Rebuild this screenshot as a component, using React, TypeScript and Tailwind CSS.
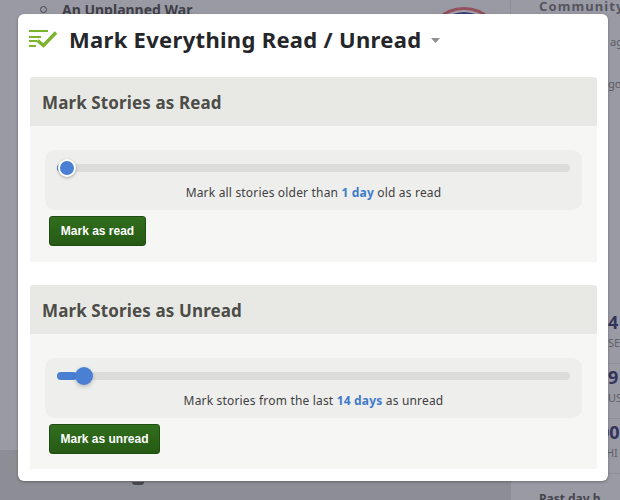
const SANS = "font-['Noto_Sans','Open_Sans',sans-serif]";

function Slider({ fill, thumb, ring }: { fill: number; thumb: number; ring?: boolean }) {
  return (
    <div className="relative h-2 rounded-full bg-[#dcdcdb]">
      <div className="absolute left-0 top-0 h-2 rounded-full bg-[#4a7fd4]" style={{ width: fill }} />
      {ring ? (
        <div
          className="absolute top-1/2 -mt-[9px] h-[18px] w-[18px] rounded-full border-2 border-white bg-[#4a7fd4] shadow-[0_1px_3px_rgba(0,0,0,0.3)]"
          style={{ left: thumb }}
        />
      ) : (
        <div
          className="absolute top-1/2 -mt-[9px] h-[18px] w-[18px] rounded-full bg-[#4a7fd4] shadow-[0_2px_4px_rgba(0,0,0,0.2)]"
          style={{ left: thumb }}
        />
      )}
    </div>
  );
}

function Section({
  title,
  pre,
  value,
  post,
  button,
  fill,
  thumb,
  ring,
  buttonWidth,
  bodyHeight,
}: {
  title: string;
  pre: string;
  value: string;
  post: string;
  button: string;
  fill: number;
  thumb: number;
  ring?: boolean;
  buttonWidth: string;
  bodyHeight: string;
}) {
  return (
    <section className="overflow-hidden rounded-t-[3px] bg-[#f6f6f4]">
      <h2 className="flex h-[49px] items-center bg-[#e8e9e4] px-3 pt-[2px] text-[17px] font-bold tracking-[0.12px] text-[#4c4d48]">
        {title}
      </h2>
      <div className={"px-[15px] pt-6 " + bodyHeight}>
        <div className="h-[60px] rounded-[10px] bg-[#eeeeed] px-3 pt-3.5">
          <Slider fill={fill} thumb={thumb} ring={ring} />
          <p className="mt-3 text-center text-[12px] leading-[18px] tracking-[0.18px] text-[#3f3f3f]">
            {pre} <span className="font-bold text-[#3f7bc9]">{value}</span> {post}
          </p>
        </div>
        <button
          className={
            "ml-1 mt-1.5 h-[30px] rounded-[3px] border border-[#1e4d10] bg-gradient-to-b from-[#316e1e] to-[#265a14] font-['Liberation_Sans',Arial,sans-serif] text-[12px] font-bold text-white " +
            buttonWidth
          }
        >
          {button}
        </button>
      </div>
    </section>
  );
}

function Stat({ value, label }: { value: string; label: string }) {
  return (
    <div className="flex h-[55px] flex-col border-b border-[#8e8e97]">
      <span className="text-[18px] leading-[26px] font-bold text-[#33335c]">{value}</span>
      <span className="text-[11px] leading-[16px] text-[#5f5f68]">{label}</span>
    </div>
  );
}

export default function App() {
  return (
    <div className={"relative h-[500px] w-[620px] overflow-hidden bg-[#9a9aa5] " + SANS}>
      {/* page dimmed behind the dialog */}
      <div className="flex h-full">
        <main className="flex w-[510px] shrink-0 flex-col">
          <div className="flex h-[42px] items-start gap-[15px] pl-10">
            <div className="mt-[6px] h-[7px] w-[7px] shrink-0 rounded-full border border-[#45454d]" />
            <span className="text-[14px] leading-5 font-bold text-[#3f3f48]">An Unplanned War</span>
            <div className="ml-auto mr-[7px] mt-[7px] h-[78px] w-[78px] shrink-0 rounded-full border-[3px] border-[#94505f] bg-[#a3a3ad] p-[2px]">
              <div className="h-full w-full rounded-full bg-[#3c3f78]" />
            </div>
          </div>
          <div className="mt-auto h-[50px] bg-[#8d8d95] pl-[132px] pt-[32px]">
            <div className="h-[3px] w-3 rounded-b-full bg-[#4a4a4e]" />
          </div>
        </main>
        <aside className="flex min-w-0 flex-1 flex-col overflow-hidden border-l border-[#8e8e97]">
          <div className="-mt-[4px] pl-[28px] text-[13px] leading-5 font-bold tracking-[1.1px] whitespace-nowrap text-[#55555e]">
            Community
          </div>
          <div className="mt-[18px] flex flex-col gap-[26px] pl-[99px] text-[11px] leading-4 text-[#5a5a63]">
            <span>ag</span>
            <span className="-ml-[2px]">go</span>
          </div>
          <div className="mt-[217px] flex flex-col pl-[97px]">
            <Stat value="4" label="SE" />
            <Stat value="9" label="US" />
            <div className="-ml-[9px]">
              <Stat value="00" label="CHI" />
            </div>
          </div>
          <div className="mt-[17px] pl-[28px] text-[12px] leading-4 font-bold whitespace-nowrap text-[#45454d]">
            Past day h
          </div>
        </aside>
      </div>

      {/* dialog */}
      <div className="absolute left-[18px] top-[14px] h-[467px] w-[590px] overflow-hidden rounded-[6px] bg-white pl-3 pr-[11px] shadow-[0_1px_3px_rgba(0,0,0,0.3)]">
        <header className="flex h-[63px] items-center pb-[13px]">
          <svg width="28" height="18" viewBox="0 0 28 18" className="-ml-[1px] shrink-0">
            <g fill="#7cb42c">
              <rect x="0" y="0" width="19" height="2" />
              <rect x="0" y="6" width="12" height="2" />
              <rect x="0" y="10" width="8" height="2" />
              <rect x="0" y="15" width="7" height="2" />
            </g>
            <path d="M8.5 10.5 L14.5 15.5 L27 2.5" fill="none" stroke="#7cb42c" strokeWidth="3.4" />
          </svg>
          <h1 className="ml-[12px] text-[22px] font-bold tracking-[0.3px] whitespace-pre text-[#24262a]">
            Mark Everything Read / Unread
          </h1>
          <svg width="9" height="5" viewBox="0 0 9 5" className="ml-[10px] mt-0.5">
            <path d="M0 0H9L4.5 5Z" fill="#8f8f8f" />
          </svg>
        </header>
        <div className="flex flex-col gap-[23px]">
          <Section
            title="Mark Stories as Read"
            pre="Mark all stories older than"
            value="1 day"
            post="old as read"
            button="Mark as read"
            fill={10}
            thumb={1}
            ring
            buttonWidth="w-[97px]"
            bodyHeight="h-[136px]"
          />
          <Section
            title="Mark Stories as Unread"
            pre="Mark stories from the last"
            value="14 days"
            post="as unread"
            button="Mark as unread"
            fill={20}
            thumb={18}
            buttonWidth="w-[111px]"
            bodyHeight="h-[135px]"
          />
        </div>
      </div>
    </div>
  );
}
